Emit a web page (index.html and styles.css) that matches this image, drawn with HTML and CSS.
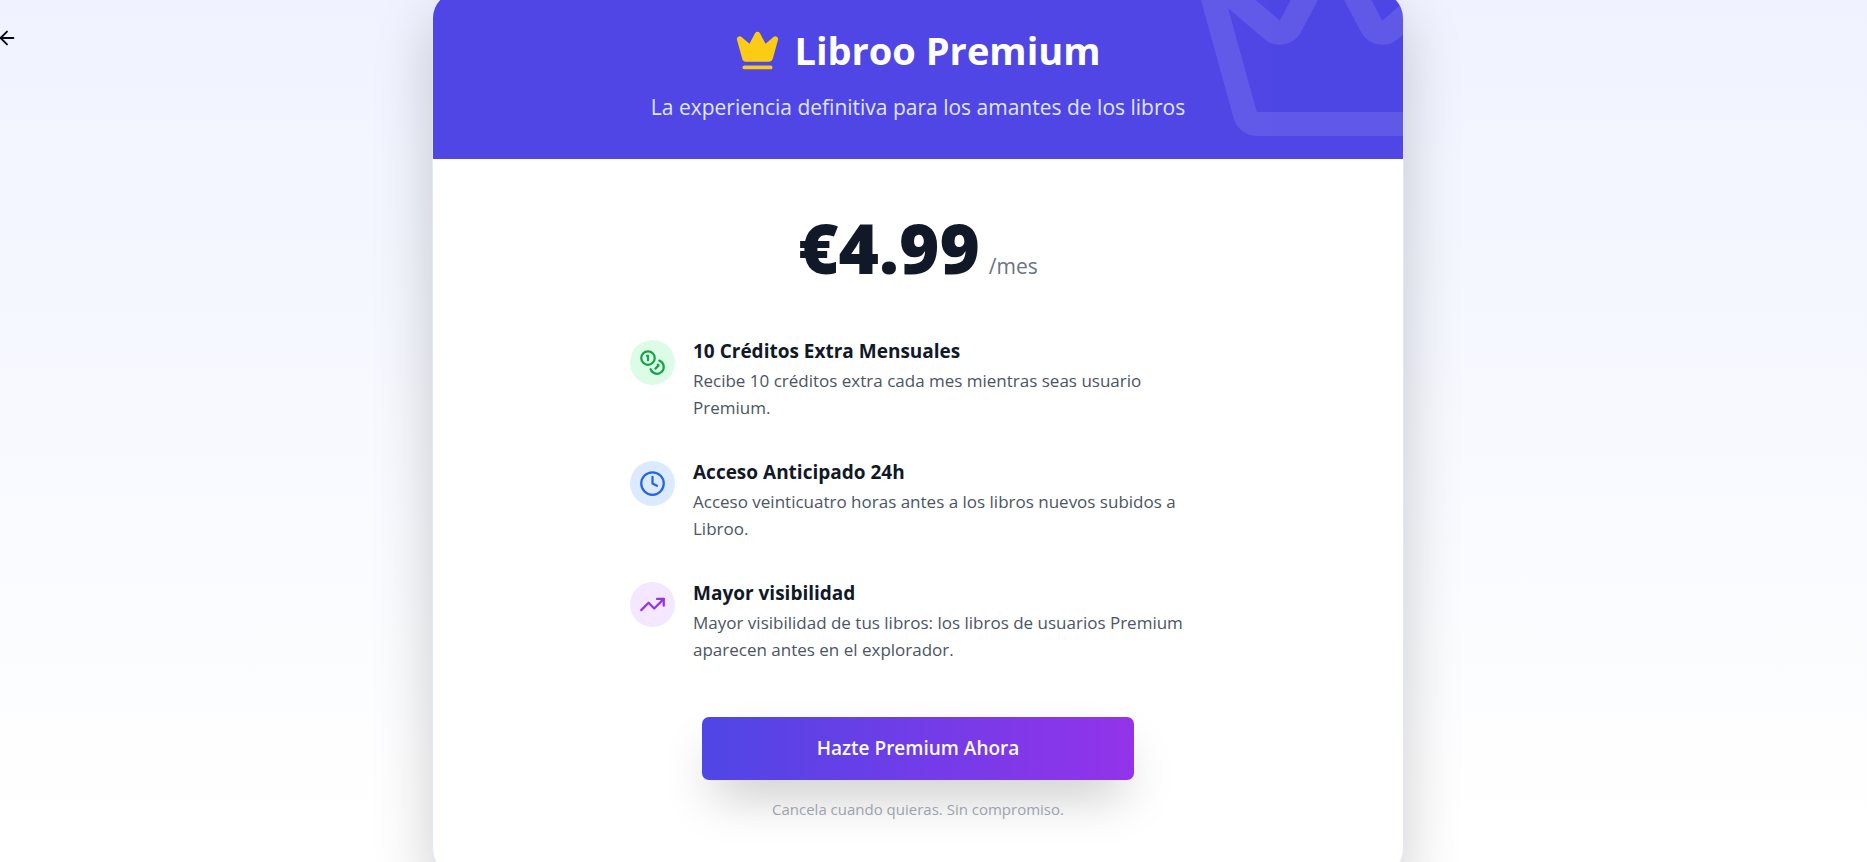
FILE: index.html
```
<!DOCTYPE html>
<html lang="es">
<head>
    <meta charset="UTF-8">
    <meta name="viewport" content="width=device-width, initial-scale=1.0">
    <title>Libroo Premium</title>
    <link rel="stylesheet" href="styles.css">
</head>
<body>
    <main class="page">
        <button type="button" class="back-button" aria-label="Volver">
            <svg class="icon" viewBox="0 0 24 24"><path d="m12 19-7-7 7-7"/><path d="M19 12H5"/></svg>
        </button>

        <section class="card">
            <header class="card-header">
                <svg class="icon header-crown" viewBox="0 0 24 24">
                    <path d="M11.562 3.266a.5.5 0 0 1 .876 0L15.39 8.87a1 1 0 0 0 1.516.294L21.183 5.5a.5.5 0 0 1 .798.519l-2.834 10.246a1 1 0 0 1-.956.734H5.81a1 1 0 0 1-.957-.734L2.02 6.02a.5.5 0 0 1 .798-.519l4.276 3.664a1 1 0 0 0 1.516-.294z"/>
                    <path d="M5 21h14"/>
                </svg>
                <h1 class="title">
                    <svg class="icon title-crown" viewBox="0 0 24 24">
                        <path d="M11.562 3.266a.5.5 0 0 1 .876 0L15.39 8.87a1 1 0 0 0 1.516.294L21.183 5.5a.5.5 0 0 1 .798.519l-2.834 10.246a1 1 0 0 1-.956.734H5.81a1 1 0 0 1-.957-.734L2.02 6.02a.5.5 0 0 1 .798-.519l4.276 3.664a1 1 0 0 0 1.516-.294z"/>
                        <path d="M5 21h14"/>
                    </svg>
                    <span>Libroo Premium</span>
                </h1>
                <p class="subtitle">La experiencia definitiva para los amantes de los libros</p>
            </header>

            <div class="card-body">
                <p class="price">
                    <span class="amount">€4.99</span>
                    <span class="period">/mes</span>
                </p>

                <ul class="features">
                    <li class="feature">
                        <span class="feature-icon green">
                            <svg class="icon" viewBox="0 0 24 24"><circle cx="8" cy="8" r="6"/><path d="M18.09 10.37A6 6 0 1 1 10.34 18"/><path d="M7 6h1v4"/><path d="m16.71 13.88.7.71-2.82 2.82"/></svg>
                        </span>
                        <div class="feature-text">
                            <h2>10 Créditos Extra Mensuales</h2>
                            <p>Recibe 10 créditos extra cada mes mientras seas usuario Premium.</p>
                        </div>
                    </li>
                    <li class="feature">
                        <span class="feature-icon blue">
                            <svg class="icon" viewBox="0 0 24 24"><circle cx="12" cy="12" r="10"/><path d="M12 6v6l4 2"/></svg>
                        </span>
                        <div class="feature-text">
                            <h2>Acceso Anticipado 24h</h2>
                            <p>Acceso veinticuatro horas antes a los libros nuevos subidos a Libroo.</p>
                        </div>
                    </li>
                    <li class="feature">
                        <span class="feature-icon purple">
                            <svg class="icon" viewBox="0 0 24 24"><path d="m22 7-8.5 8.5-5-5L2 17"/><path d="M16 7h6v6"/></svg>
                        </span>
                        <div class="feature-text">
                            <h2>Mayor visibilidad</h2>
                            <p>Mayor visibilidad de tus libros: los libros de usuarios Premium aparecen antes en el explorador.</p>
                        </div>
                    </li>
                </ul>

                <button type="button" class="subscribe-button">Hazte Premium Ahora</button>
                <p class="note">Cancela cuando quieras. Sin compromiso.</p>
            </div>
        </section>
    </main>
</body>
</html>
```
FILE: styles.css
```
* {
    box-sizing: border-box;
}
body {
    margin: 0;
    font-family: "Segoe UI", "Open Sans", "Noto Sans", sans-serif;
    font-size: 17px;
    line-height: 27px;
    color: #020817;
}
h1, h2, p, ul {
    margin: 0;
    padding: 0;
}
button {
    border: none;
    font-family: inherit;
    cursor: pointer;
}
.icon {
    display: block;
    fill: none;
    stroke: currentColor;
    stroke-width: 2;
    stroke-linecap: round;
    stroke-linejoin: round;
}
.page {
    position: relative;
    display: flex;
    justify-content: center;
    align-items: center;
    height: 100vh;
    padding-top: 4px;
    padding-right: 31px;
    overflow: hidden;
    background: linear-gradient(to bottom, #f0f3ff, #fff 96%);
}
.back-button {
    position: absolute;
    top: 27px;
    left: -4px;
    padding: 0;
    background: none;
    color: inherit;
}
.back-button .icon {
    width: 22px;
    height: 22px;
}
.card {
    width: 100%;
    max-width: 972px;
    overflow: hidden;
    border: 1px solid #e0e7ff;
    border-radius: 27px;
    background-color: #fff;
    box-shadow: 0 25px 60px rgba(0, 0, 0, 0.2);
}
.card-header {
    position: relative;
    overflow: hidden;
    padding: 36px;
    background-color: #4f46e5;
    color: #fff;
    text-align: center;
}
.header-crown {
    position: absolute;
    top: -72px;
    right: -72px;
    width: 288px;
    height: 288px;
    opacity: 0.1;
}
.title {
    display: flex;
    justify-content: center;
    align-items: center;
    gap: 14px;
    margin-bottom: 18px;
    font-size: 38px;
    font-weight: 700;
    line-height: 45px;
}
.title-crown {
    width: 45px;
    height: 45px;
    fill: currentColor;
    color: #facc15;
}
.subtitle {
    font-size: 21px;
    line-height: 32px;
    color: #e0e7ff;
}
.card-body {
    display: flex;
    flex-direction: column;
    align-items: center;
    padding: 54px;
}
.price {
    display: flex;
    align-items: baseline;
    gap: 9px;
    margin-bottom: 54px;
    line-height: 32px;
}
.amount {
    font-size: 69px;
    font-weight: 800;
    line-height: 68px;
    color: #111827;
}
.period {
    font-size: 21px;
    color: #6b7280;
}
.features {
    display: flex;
    flex-direction: column;
    gap: 36px;
    width: 100%;
    max-width: 576px;
    margin-bottom: 54px;
    list-style: none;
}
.feature {
    display: flex;
    align-items: flex-start;
    gap: 18px;
}
.feature-icon {
    flex-shrink: 0;
    margin-top: 4px;
    padding: 9px;
    border-radius: 50%;
}
.feature-icon .icon {
    width: 27px;
    height: 27px;
}
.green {
    background-color: #dcfce7;
    color: #16a34a;
}
.blue {
    background-color: #dbeafe;
    color: #2563eb;
}
.purple {
    background-color: #f3e8ff;
    color: #9333ea;
}
.feature-text h2 {
    font-size: 19px;
    font-weight: 700;
    line-height: 31px;
    color: #111827;
}
.feature-text p {
    color: #4b5563;
}
.subscribe-button {
    width: 100%;
    max-width: 432px;
    height: 63px;
    margin-bottom: 18px;
    border-radius: 7px;
    background: linear-gradient(to right, #4f46e5, #9333ea);
    color: #f8fafc;
    font-size: 19px;
    font-weight: 600;
    box-shadow: 0 25px 50px -12px rgba(0, 0, 0, 0.25);
}
.note {
    font-size: 15px;
    line-height: 23px;
    color: #9ca3af;
}
```
